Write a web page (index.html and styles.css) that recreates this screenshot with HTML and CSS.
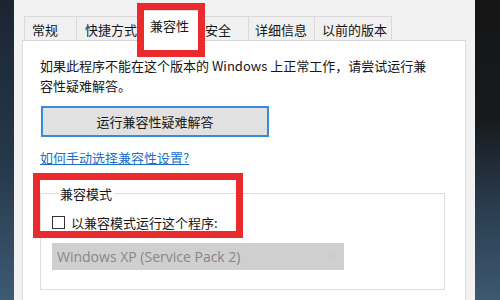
FILE: index.html
```html
<!DOCTYPE html>
<html lang="zh-CN">
<head>
<meta charset="utf-8">
<link rel="stylesheet" href="styles.css">
</head>
<body>
<div class="strip-left"></div>
<div class="dialog">
  <div class="tabs">
    <div class="tab t1">常规</div>
    <div class="tab t2">快捷方式</div>
    <div class="tab t3 active">兼容性</div>
    <div class="tab t4">安全</div>
    <div class="tab t5">详细信息</div>
    <div class="tab t6">以前的版本</div>
  </div>
  <div class="panel">
    <p class="intro">如果此程序不能在这个版本的 Windows 上正常工作，请尝试运行兼<br>容性疑难解答。</p>
    <button class="btn">运行兼容性疑难解答</button>
    <a class="link" href="#">如何手动选择兼容性设置?</a>
    <fieldset class="group">
      <legend>兼容模式</legend>
      <label class="check"><span class="box"></span>以兼容模式运行这个程序:</label>
      <div class="select">
        <span>Windows XP (Service Pack 2)</span>
        <svg class="chev" width="9" height="6" viewBox="0 0 9 6"><polyline points="0.5,0.5 4.5,4.5 8.5,0.5" fill="none" stroke="#c4c4c4" stroke-width="1"/></svg>
      </div>
    </fieldset>
  </div>
</div>
<div class="strip-right"></div>
<div class="mark mark-tab"></div>
<div class="mark mark-group"></div>
</body>
</html>
```
FILE: styles.css
```css
html, body {
  margin: 0;
  padding: 0;
}
body {
  position: relative;
  width: 500px;
  height: 300px;
  overflow: hidden;
  display: flex;
  font-family: "Noto Sans CJK SC", "Noto Sans", sans-serif;
  font-size: 13px;
  color: #161616;
}
.strip-left {
  width: 14px;
  background: linear-gradient(#1b2530, #26384a 55%, #3d5a74);
}
.strip-right {
  flex: 1;
  background: linear-gradient(#151515, #171a1d 40%, #2a3e50 70%, #3e5870);
}
.dialog {
  width: 461px;
  box-sizing: border-box;
  background: #f2f2f2;
  padding: 0 9px 0 8px;
  display: flex;
  flex-direction: column;
}
.tabs {
  display: flex;
  align-items: flex-end;
  padding-left: 2px;
  margin-top: 10px;
  height: 30px;
  position: relative;
  z-index: 1;
}
.tab {
  box-sizing: border-box;
  height: 24px;
  padding-top: 4px;
  line-height: 18px;
  background: #f0f0f0;
  border: 1px solid #d9d9d9;
  border-bottom: none;
  border-right: none;
  white-space: nowrap;
}
.t1 { width: 52px; padding-left: 7px; }
.t2 { width: 64px; padding-left: 8px; }
.t3 { width: 60px; padding-left: 9px; }
.t4 { width: 48px; padding-left: 5px; }
.t5 { width: 66px; padding-left: 6px; }
.t6 { width: 78px; padding-left: 7px; border-right: 1px solid #d9d9d9; }
.tab.active {
  height: 31px;
  margin-bottom: -1px;
  padding-top: 6px;
  background: #ffffff;
  border-right: 1px solid #d9d9d9;
}
.tab.active + .tab { border-left: none; }
.panel {
  flex: 1;
  background: #ffffff;
  border: 1px solid #d9d9d9;
  border-bottom: none;
  padding: 15px 0 0 17px;
  display: flex;
  flex-direction: column;
  align-items: flex-start;
}
.intro {
  margin: 0;
  line-height: 20px;
}
.btn {
  margin: 10px 0 0 1px;
  width: 228px;
  height: 31px;
  background: #e1e1e1;
  border: 2px solid #3b8ad8;
  font-family: inherit;
  font-size: 13px;
  color: #161616;
  padding: 0;
}
.link {
  margin-top: 11px;
  line-height: 20px;
  color: #1a6fc9;
  text-decoration: underline;
}
.group {
  margin: 14px 0 0 0;
  width: 405px;
  box-sizing: border-box;
  border: 1px solid #dcdcdc;
  padding: 8px 0 19px 11px;
}
.group legend {
  padding: 2px 2px 0;
  margin-left: 6px;
  line-height: 20px;
}
.check {
  display: flex;
  align-items: center;
  height: 20px;
}
.box {
  width: 11px;
  height: 11px;
  border: 1px solid #333;
  margin-right: 6px;
  background: #fff;
}
.select {
  margin-top: 11px;
  width: 292px;
  height: 27px;
  box-sizing: border-box;
  background: #cfcfcf;
  display: flex;
  align-items: center;
  justify-content: space-between;
  padding: 0 8px 0 5px;
  color: #888888;
  font-family: "Open Sans", "Noto Sans", sans-serif;
  font-size: 14px;
}
.chev { margin-top: 1px; }
.mark {
  position: absolute;
  box-sizing: border-box;
  border: 7px solid #ea2a2d;
  z-index: 5;
}
.mark-tab {
  left: 137px;
  top: 3px;
  width: 68px;
  height: 54px;
}
.mark-group {
  left: 33px;
  top: 173px;
  width: 210px;
  height: 65px;
}
```
